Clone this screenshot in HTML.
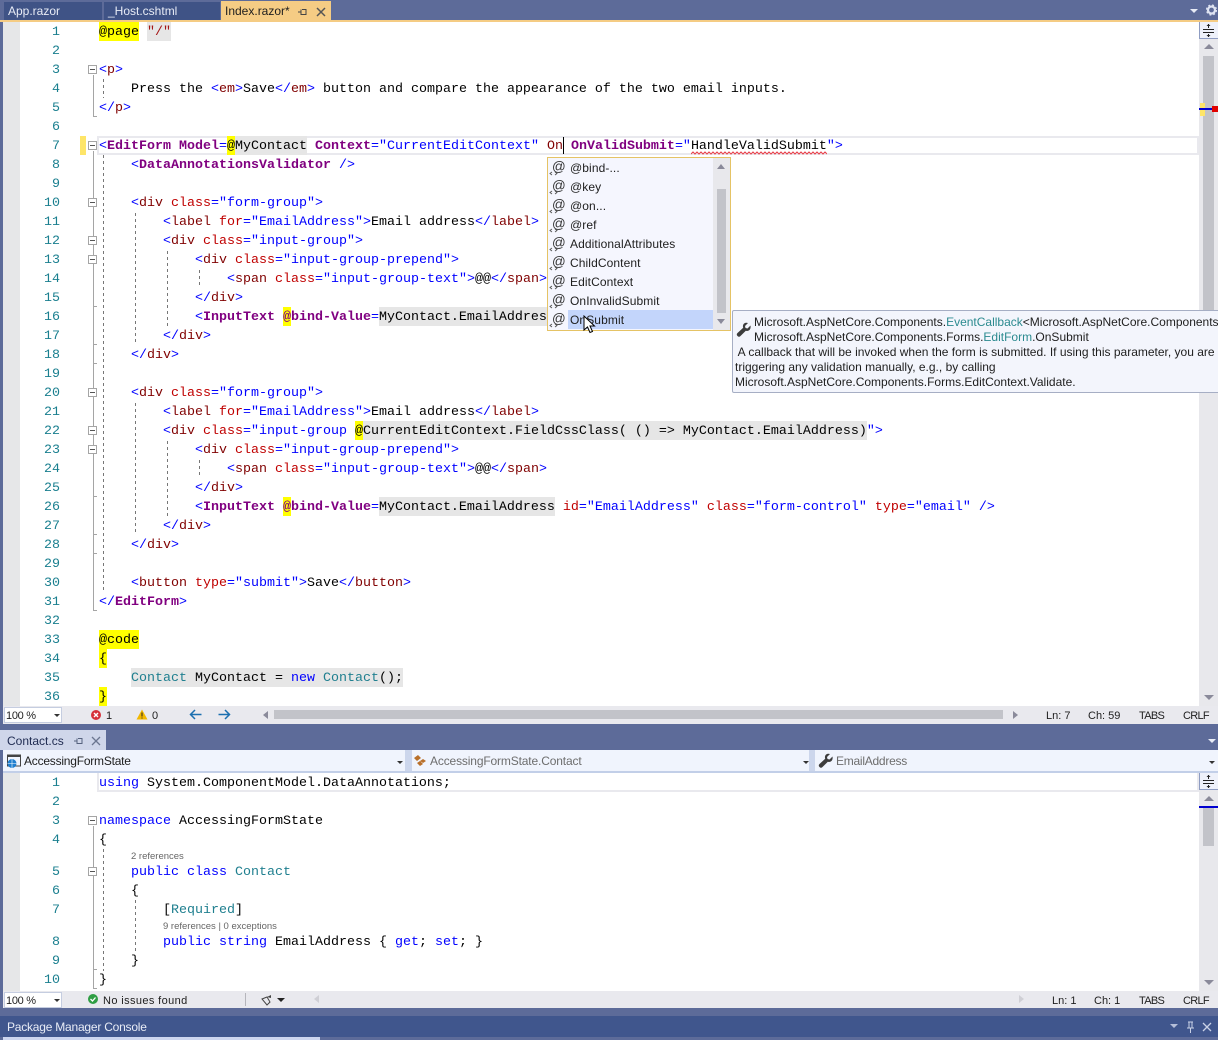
<!DOCTYPE html>
<html><head><meta charset="utf-8">
<style>
html,body{margin:0;padding:0;width:1218px;height:1040px;overflow:hidden;background:#5d6b99}
*{box-sizing:border-box}
.a{position:absolute}
body{font-family:"Liberation Sans",sans-serif;font-size:12px;color:#1e1e1e}
pre{margin:0;font-family:"Liberation Mono",monospace;font-size:13.33px;line-height:19px;position:absolute;white-space:pre;color:#000}
.n{color:#1a7f8f;text-align:right;left:20px;width:40px}
i{font-style:normal}
.b{color:#00f}.m{color:#800000}.r{color:#c00000}.p{color:#800080;font-weight:bold}.t{color:#1f7f8f}.s{color:#a31515}
.y,.g{display:inline-block;line-height:19px;height:18px;vertical-align:top}
.y{background:#ff0;box-shadow:0 -1px 0 #ff0}.g{background:#e6e6e6;box-shadow:0 -1px 0 #e6e6e6}
.o{position:absolute;left:88px;width:9px;height:9px;border:1px solid #a5a5a5;background:#fff}
.o:after{content:"";position:absolute;left:1px;top:3px;width:5px;height:1px;background:#555}
.v{position:absolute;left:93px;width:1px;background:#a5a5a5}
.k{position:absolute;left:93px;width:4px;height:1px;background:#a5a5a5}
.d{position:absolute;width:1px;background:repeating-linear-gradient(to bottom,#777 0,#777 3px,transparent 3px,transparent 6px)}
.u{position:absolute;white-space:pre}
.it{position:absolute;left:570px;height:19px;line-height:19px;font-size:12px;color:#1e1e1e;letter-spacing:.1px}
.at{position:absolute;left:552px;font-size:13.500px;line-height:15px;color:#333;height:15px}
.tri{position:absolute;width:0;height:0;border-style:solid}
.st{position:absolute;font-size:11px;line-height:14px;color:#1e1e1e;white-space:pre}
.cap{letter-spacing:-.7px}
</style></head>
<body>
<!-- top tabs -->
<div class="a" style="left:0;top:0;width:1218px;height:20px;background:#5d6b99"></div>
<div class="a u" style="left:4px;top:2px;width:98px;height:18px;background:#3f5386;color:#e8ecf6;line-height:18px;padding-left:4px">App.razor</div>
<div class="a u" style="left:104px;top:2px;width:116px;height:18px;background:#3f5386;color:#e8ecf6;line-height:18px;padding-left:4px">_Host.cshtml</div>
<div class="a u" style="left:221px;top:1px;width:110px;height:20px;background:#f5cc84;color:#1e1e1e;line-height:21px;padding-left:4px">Index.razor*</div>
<svg class="a" style="left:295px;top:6px" width="38" height="12"><path d="M3 6h3M6 3.500v5h1M7 3.500h4v5h-4" fill="none" stroke="#444"/><path d="M22 2l8 8M30 2l-8 8" stroke="#555" stroke-width="1.500"/></svg>
<div class="tri" style="left:1190px;top:9px;border-width:4px 4px 0;border-color:#e8ecf6 transparent transparent"></div>
<svg class="a" style="left:1206px;top:4px" width="11" height="12"><circle cx="5.500" cy="6" r="3.500" fill="none" stroke="#dfe4f2" stroke-width="2.200"/><circle cx="5.500" cy="6" r="5" fill="none" stroke="#dfe4f2" stroke-width="1.200" stroke-dasharray="2 2"/></svg>
<div class="a" style="left:0;top:20px;width:1218px;height:2px;background:#f5cc84"></div>

<!-- top editor -->
<div class="a" style="left:3px;top:22px;width:17px;height:684px;background:#e6e7e8"></div>
<div class="a" style="left:20px;top:22px;width:1179px;height:684px;background:#fff"></div>
<div class="a" style="left:97px;top:136px;width:1102px;height:19px;border:2px solid #e9e9ee"></div>
<div class="a" style="left:80px;top:136px;width:6px;height:19px;background:#fee568"></div>

<div class="v" style="top:75px;height:42px"></div><div class="k" style="top:116px"></div>
<div class="v" style="top:151px;height:460px"></div><div class="k" style="top:610px"></div>
<div class="k" style="top:363px"></div><div class="k" style="top:344px"></div><div class="k" style="top:306px"></div>
<div class="k" style="top:553px"></div><div class="k" style="top:534px"></div><div class="k" style="top:496px"></div>
<div class="o" style="top:65px"></div>
<div class="o" style="top:141px"></div>
<div class="o" style="top:198px"></div>
<div class="o" style="top:236px"></div>
<div class="o" style="top:255px"></div>
<div class="o" style="top:388px"></div>
<div class="o" style="top:426px"></div>
<div class="o" style="top:445px"></div>

<div class="d" style="left:103px;top:79px;height:19px"></div>
<div class="d" style="left:103px;top:155px;height:437px"></div>
<div class="d" style="left:135px;top:213px;height:131px"></div>
<div class="d" style="left:135px;top:403px;height:131px"></div>
<div class="d" style="left:167px;top:251px;height:76px"></div>
<div class="d" style="left:167px;top:441px;height:76px"></div>
<div class="d" style="left:199px;top:270px;height:18px"></div>
<div class="d" style="left:199px;top:460px;height:18px"></div>

<pre class="n" style="top:23px">1
2
3
4
5
6
7
8
9
10
11
12
13
14
15
16
17
18
19
20
21
22
23
24
25
26
27
28
29
30
31
32
33
34
35
36</pre>
<pre style="left:99px;top:23px"><span class="y">@page</span> <span class="g s">"/"</span>

<i class="b">&lt;</i><i class="m">p</i><i class="b">&gt;</i>
    Press the <i class="b">&lt;</i><i class="m">em</i><i class="b">&gt;</i>Save<i class="b">&lt;/</i><i class="m">em</i><i class="b">&gt;</i> button and compare the appearance of the two email inputs.
<i class="b">&lt;/</i><i class="m">p</i><i class="b">&gt;</i>

<i class="b">&lt;</i><i class="p">EditForm</i> <i class="p">Model</i><i class="b">=</i><span class="y">@</span><span class="g">MyContact</span> <i class="p">Context</i><i class="b">="CurrentEditContext"</i> <i class="m">On</i> <i class="p">OnValidSubmit</i><i class="b">="</i>HandleValidSubmit<i class="b">"&gt;</i>
    <i class="b">&lt;</i><i class="p">DataAnnotationsValidator</i> <i class="b">/&gt;</i>

    <i class="b">&lt;</i><i class="m">div</i> <i class="r">class</i><i class="b">="form-group"&gt;</i>
        <i class="b">&lt;</i><i class="m">label</i> <i class="r">for</i><i class="b">="EmailAddress"&gt;</i>Email address<i class="b">&lt;/</i><i class="m">label</i><i class="b">&gt;</i>
        <i class="b">&lt;</i><i class="m">div</i> <i class="r">class</i><i class="b">="input-group"&gt;</i>
            <i class="b">&lt;</i><i class="m">div</i> <i class="r">class</i><i class="b">="input-group-prepend"&gt;</i>
                <i class="b">&lt;</i><i class="m">span</i> <i class="r">class</i><i class="b">="input-group-text"&gt;</i>@@<i class="b">&lt;/</i><i class="m">span</i><i class="b">&gt;</i>
            <i class="b">&lt;/</i><i class="m">div</i><i class="b">&gt;</i>
            <i class="b">&lt;</i><i class="p">InputText</i> <span class="y" style="font-weight:bold;color:#800080">@</span><i class="p">bind-Value</i><i class="b">=</i><span class="g">MyContact.EmailAddress</span>
        <i class="b">&lt;/</i><i class="m">div</i><i class="b">&gt;</i>
    <i class="b">&lt;/</i><i class="m">div</i><i class="b">&gt;</i>

    <i class="b">&lt;</i><i class="m">div</i> <i class="r">class</i><i class="b">="form-group"&gt;</i>
        <i class="b">&lt;</i><i class="m">label</i> <i class="r">for</i><i class="b">="EmailAddress"&gt;</i>Email address<i class="b">&lt;/</i><i class="m">label</i><i class="b">&gt;</i>
        <i class="b">&lt;</i><i class="m">div</i> <i class="r">class</i><i class="b">="input-group </i><span class="y">@</span><span class="g">CurrentEditContext.FieldCssClass( () =&gt; MyContact.EmailAddress)</span><i class="b">"&gt;</i>
            <i class="b">&lt;</i><i class="m">div</i> <i class="r">class</i><i class="b">="input-group-prepend"&gt;</i>
                <i class="b">&lt;</i><i class="m">span</i> <i class="r">class</i><i class="b">="input-group-text"&gt;</i>@@<i class="b">&lt;/</i><i class="m">span</i><i class="b">&gt;</i>
            <i class="b">&lt;/</i><i class="m">div</i><i class="b">&gt;</i>
            <i class="b">&lt;</i><i class="p">InputText</i> <span class="y" style="font-weight:bold;color:#800080">@</span><i class="p">bind-Value</i><i class="b">=</i><span class="g">MyContact.EmailAddress</span> <i class="r">id</i><i class="b">="EmailAddress"</i> <i class="r">class</i><i class="b">="form-control"</i> <i class="r">type</i><i class="b">="email"</i> <i class="b">/&gt;</i>
        <i class="b">&lt;/</i><i class="m">div</i><i class="b">&gt;</i>
    <i class="b">&lt;/</i><i class="m">div</i><i class="b">&gt;</i>

    <i class="b">&lt;</i><i class="m">button</i> <i class="r">type</i><i class="b">="submit"&gt;</i>Save<i class="b">&lt;/</i><i class="m">button</i><i class="b">&gt;</i>
<i class="b">&lt;/</i><i class="p">EditForm</i><i class="b">&gt;</i>

<span class="y">@code</span>
<span class="y">{</span>
    <span class="g"><i class="t">Contact</i> MyContact = <i class="b">new</i> <i class="t">Contact</i>();</span>
<span class="y">}</span></pre>
<div class="a" style="left:563px;top:137px;width:1px;height:17px;background:#000"></div>
<svg class="a" style="left:691px;top:151px" width="136" height="4"><path d="M0 3 L2 1 L4 3 L6 1 L8 3 L10 1 L12 3 L14 1 L16 3 L18 1 L20 3 L22 1 L24 3 L26 1 L28 3 L30 1 L32 3 L34 1 L36 3 L38 1 L40 3 L42 1 L44 3 L46 1 L48 3 L50 1 L52 3 L54 1 L56 3 L58 1 L60 3 L62 1 L64 3 L66 1 L68 3 L70 1 L72 3 L74 1 L76 3 L78 1 L80 3 L82 1 L84 3 L86 1 L88 3 L90 1 L92 3 L94 1 L96 3 L98 1 L100 3 L102 1 L104 3 L106 1 L108 3 L110 1 L112 3 L114 1 L116 3 L118 1 L120 3 L122 1 L124 3 L126 1 L128 3 L130 1 L132 3 L134 1 L136 3" fill="none" stroke="#e8404a" stroke-width="1"/></svg>

<!-- top scrollbar -->
<div class="a" style="left:1199px;top:22px;width:19px;height:684px;background:#e8e8ec"></div>
<div class="a" style="left:1199px;top:22px;width:19px;height:17px;background:#eef1fa;border-left:1px solid #8e9cc2;border-bottom:1px solid #8e9cc2"></div>
<svg class="a" style="left:1202px;top:23px" width="14" height="15"><path d="M1 6.500h11M1 9.500h11" stroke="#222" stroke-width="1"/><path d="M6.500 1v4M6.500 11v3" stroke="#222"/><path d="M4.500 3l2-2 2 2zM4.500 12l2 2 2-2z" fill="#222"/></svg>
<div class="tri" style="left:1204px;top:44px;border-width:0 5px 5px;border-color:transparent transparent #8a8a9a"></div>
<div class="a" style="left:1203px;top:56px;width:11px;height:294px;background:#c2c3c9"></div>
<div class="a" style="left:1200px;top:103px;width:5px;height:13px;background:#fee568"></div>
<div class="a" style="left:1199px;top:108px;width:19px;height:2px;background:#0000d0"></div>
<div class="a" style="left:1212px;top:106px;width:6px;height:6px;background:#e00000"></div>
<div class="tri" style="left:1204px;top:695px;border-width:5px 5px 0;border-color:#8a8a9a transparent transparent"></div>

<!-- completion popup -->
<div class="a" style="left:547px;top:157px;width:184px;height:174px;background:#f5f6fe;border:1px solid #e5c365"></div>
<div class="a" style="left:568px;top:310px;width:145px;height:19px;background:#c3d5fb"></div>
<div class="a" style="left:713px;top:158px;width:17px;height:172px;background:#e8e8ec"></div>
<div class="tri" style="left:717px;top:164px;border-width:0 4.500px 5px;border-color:transparent transparent #8a8a9a"></div>
<div class="a" style="left:717px;top:189px;width:9px;height:124px;background:#c2c3c9"></div>
<div class="tri" style="left:717px;top:319px;border-width:5px 4.500px 0;border-color:#8a8a9a transparent transparent"></div>
<div class="at" style="top:159px">@</div><div class="it" style="top:159px">@bind-...</div>
<div class="at" style="top:178px">@</div><div class="it" style="top:178px">@key</div>
<div class="at" style="top:197px">@</div><div class="it" style="top:197px">@on...</div>
<div class="at" style="top:216px">@</div><div class="it" style="top:216px">@ref</div>
<div class="at" style="top:235px">@</div><div class="it" style="top:235px">AdditionalAttributes</div>
<div class="at" style="top:254px">@</div><div class="it" style="top:254px">ChildContent</div>
<div class="at" style="top:273px">@</div><div class="it" style="top:273px">EditContext</div>
<div class="at" style="top:292px">@</div><div class="it" style="top:292px">OnInvalidSubmit</div>
<div class="at" style="top:311px">@</div><div class="it" style="top:311px">OnSubmit</div>
<svg class="a" style="left:549px;top:158px" width="10" height="172"><path fill="none" stroke="#555" stroke-width=".9" d="M3 14l-2 1.500 2 1.500M6 14l2 1.500-2 1.500M3 33l-2 1.500 2 1.500M6 33l2 1.500-2 1.500M3 52l-2 1.500 2 1.500M6 52l2 1.500-2 1.500M3 71l-2 1.500 2 1.500M6 71l2 1.500-2 1.500M3 90l-2 1.500 2 1.500M6 90l2 1.500-2 1.500M3 109l-2 1.500 2 1.500M6 109l2 1.500-2 1.500M3 128l-2 1.500 2 1.500M6 128l2 1.500-2 1.500M3 147l-2 1.500 2 1.500M6 147l2 1.500-2 1.500M3 166l-2 1.500 2 1.500M6 166l2 1.500-2 1.500"/></svg>
<svg class="a" style="left:583px;top:315px" width="13" height="19"><path d="M1 1v14l3.500-3 2.500 5.500 2.500-1-2.500-5.500h4.500z" fill="#fff" stroke="#000" stroke-width="1"/></svg>

<!-- tooltip -->
<div class="a" style="left:732px;top:310px;width:490px;height:83px;background:#f3f5fc;border:1px solid #a6aec4;border-radius:2px"></div>
<svg class="a" style="left:736px;top:322px" width="16" height="16"><path d="M14.500 3.500l-3 3-2-.5-.5-2 3-3c-2-.7-4.500 0-5 2.500-.2 1 0 1.500.2 2.200L1.500 11c-1 1-1 2 0 3s2 1 3 0l5.300-5.200c2.500.7 5.500-1 4.700-5.300z" fill="#3c3c3c"/></svg>
<div class="a u" style="left:754px;top:315px;line-height:15px;font-size:12px;color:#1e1e1e">Microsoft.AspNetCore.Components.<span style="color:#2b8a8f">EventCallback</span>&lt;Microsoft.AspNetCore.Components
Microsoft.AspNetCore.Components.Forms.<span style="color:#2b8a8f">EditForm</span>.OnSubmit</div>
<div class="a u" style="left:735px;top:345px;line-height:15px;font-size:12px;color:#1e1e1e"> A callback that will be invoked when the form is submitted. If using this parameter, you are
triggering any validation manually, e.g., by calling
Microsoft.AspNetCore.Components.Forms.EditContext.Validate.</div>

<!-- top status -->
<div class="a" style="left:3px;top:706px;width:1215px;height:18px;background:#e9e9ee"></div>
<div class="a" style="left:4px;top:707px;width:58px;height:16px;background:#fff;border:1px solid #c5cde0"></div>
<div class="st" style="left:6px;top:709px;letter-spacing:-.3px">100 %</div>
<div class="tri" style="left:54px;top:714px;border-width:3px 3px 0;border-color:#333 transparent transparent"></div>
<svg class="a" style="left:90px;top:709px" width="12" height="12"><circle cx="6" cy="6" r="5" fill="#d6303a"/><path d="M4 4l4 4M8 4l-4 4" stroke="#fff" stroke-width="1.400"/></svg>
<div class="st" style="left:106px;top:709px">1</div>
<svg class="a" style="left:136px;top:709px" width="12" height="11"><path d="M6 .500l5.500 10H.500z" fill="#f2b800"/><path d="M6 3.500v4M6 8.500v1" stroke="#222" stroke-width="1"/></svg>
<div class="st" style="left:152px;top:709px">0</div>
<svg class="a" style="left:189px;top:708px" width="42" height="13"><path d="M1.500 6.500h11M6 2L1.500 6.500 6 11M29.500 6.500h11M36 2l4.500 4.500L36 11" fill="none" stroke="#1a6fb0" stroke-width="1.500"/></svg>
<div class="tri" style="left:263px;top:711px;border-width:4px 5px 4px 0;border-color:transparent #8a8a9a transparent transparent"></div>
<div class="a" style="left:274px;top:710px;width:729px;height:9px;background:#c2c3c9"></div>
<div class="tri" style="left:1013px;top:711px;border-width:4px 0 4px 5px;border-color:transparent transparent transparent #8a8a9a"></div>
<div class="st" style="left:1046px;top:709px">Ln: 7</div>
<div class="st" style="left:1088px;top:709px">Ch: 59</div>
<div class="st cap" style="left:1139px;top:709px">TABS</div>
<div class="st cap" style="left:1183px;top:709px">CRLF</div>

<!-- lower tab row -->
<div class="a" style="left:0;top:724px;width:1218px;height:26px;background:#5d6b99"></div>
<div class="a u" style="left:0;top:730px;width:106px;height:20px;background:#cfd6ea;padding-left:7px;line-height:22px;color:#1e2a50">Contact.cs</div>
<svg class="a" style="left:72px;top:735px" width="32" height="12"><path d="M2 6h3M5 3.500v5h1M6 3.500h4v5H6" fill="none" stroke="#56627f"/><path d="M20 2l8 8M28 2l-8 8" stroke="#6b7690" stroke-width="1.300"/></svg>
<div class="tri" style="left:1208px;top:739px;border-width:4px 4px 0;border-color:#e8ecf6 transparent transparent"></div>

<!-- nav bar -->
<div class="a" style="left:3px;top:750px;width:1215px;height:23px;background:#f0f4fd;border-bottom:2px solid #c2cfe8"></div>
<div class="a" style="left:405px;top:750px;width:7px;height:21px;background:#ccd6ec"></div>
<div class="a" style="left:809px;top:750px;width:6px;height:21px;background:#ccd6ec"></div>
<svg class="a" style="left:7px;top:754px" width="15" height="15"><rect x="0.500" y="1" width="13" height="11" fill="none" stroke="#444"/><rect x="0" y="1" width="14" height="2" fill="#444"/><circle cx="5" cy="9.500" r="4.500" fill="#1f7fd0"/><path d="M.500 9.500h9M5 5v9" stroke="#fff" stroke-width=".6"/></svg>
<div class="a u" style="left:24px;top:754px;line-height:15px;color:#1e1e1e;letter-spacing:-.22px">AccessingFormState</div>
<div class="tri" style="left:397px;top:761px;border-width:3px 3px 0;border-color:#333 transparent transparent"></div>
<svg class="a" style="left:413px;top:754px" width="15" height="14"><path d="M1 4l4-3 3 3-4 3zM7 7l3-2 3 2-3 2zM4 9l3-2 3 3-3 2z" fill="#b9702a"/></svg>
<div class="a u" style="left:430px;top:754px;line-height:15px;color:#6d6d6d;letter-spacing:-.15px">AccessingFormState.Contact</div>
<div class="tri" style="left:803px;top:761px;border-width:3px 3px 0;border-color:#333 transparent transparent"></div>
<svg class="a" style="left:818px;top:753px" width="16" height="16"><path d="M14.500 3.500l-3 3-2-.5-.5-2 3-3c-2-.7-4.500 0-5 2.500-.2 1 0 1.500.2 2.200L1.500 11c-1 1-1 2 0 3s2 1 3 0l5.300-5.200c2.500.7 5.500-1 4.700-5.300z" fill="#3c3c3c"/></svg>
<div class="a u" style="left:836px;top:754px;line-height:15px;color:#6d6d6d;letter-spacing:-.25px">EmailAddress</div>
<div class="tri" style="left:1209px;top:761px;border-width:3px 3px 0;border-color:#333 transparent transparent"></div>

<!-- lower editor -->
<div class="a" style="left:3px;top:773px;width:17px;height:218px;background:#e6e7e8"></div>
<div class="a" style="left:20px;top:773px;width:1179px;height:218px;background:#fff"></div>
<div class="a" style="left:97px;top:773px;width:1102px;height:19px;border:2px solid #e9e9ee;border-top-width:0"></div>
<div class="v" style="top:826px;height:163px"></div><div class="k" style="top:988px"></div><div class="k" style="top:969px"></div>
<div class="o" style="top:816px"></div>
<div class="o" style="top:867px"></div>
<div class="d" style="left:103px;top:849px;height:122px"></div>
<div class="d" style="left:135px;top:900px;height:52px"></div>
<pre class="n" style="top:774px">1
2
3
4</pre>
<pre class="n" style="top:863px">5
6
7</pre>
<pre class="n" style="top:933px">8
9
10</pre>
<pre style="left:99px;top:774px"><i class="b">using</i> System.ComponentModel.DataAnnotations;

<i class="b">namespace</i> AccessingFormState
{</pre>
<div class="a u" style="left:131px;top:851px;font-size:9.500px;line-height:12px;color:#666">2 references</div>
<pre style="left:99px;top:863px">    <i class="b">public</i> <i class="b">class</i> <i class="t">Contact</i>
    {
        [<i class="t">Required</i>]</pre>
<div class="a u" style="left:163px;top:921px;font-size:9.500px;line-height:12px;color:#666">9 references | 0 exceptions</div>
<pre style="left:99px;top:933px">        <i class="b">public</i> <i class="b">string</i> EmailAddress { <i class="b">get</i>; <i class="b">set</i>; }
    }
}</pre>
<div class="a" style="left:1199px;top:773px;width:19px;height:218px;background:#e8e8ec"></div>
<div class="a" style="left:1199px;top:773px;width:19px;height:17px;background:#eef1fa;border-left:1px solid #8e9cc2;border-bottom:1px solid #8e9cc2"></div>
<svg class="a" style="left:1202px;top:774px" width="14" height="15"><path d="M1 6.500h11M1 9.500h11" stroke="#222"/><path d="M6.500 1v4M6.500 11v3" stroke="#222"/><path d="M4.500 3l2-2 2 2zM4.500 12l2 2 2-2z" fill="#222"/></svg>
<div class="tri" style="left:1204px;top:796px;border-width:0 5px 5px;border-color:transparent transparent #8a8a9a"></div>
<div class="a" style="left:1203px;top:808px;width:11px;height:38px;background:#c2c3c9"></div>
<div class="a" style="left:1199px;top:806px;width:19px;height:2px;background:#0000d0"></div>
<div class="tri" style="left:1204px;top:980px;border-width:5px 5px 0;border-color:#8a8a9a transparent transparent"></div>

<!-- lower status -->
<div class="a" style="left:3px;top:991px;width:1215px;height:17px;background:#e9e9ee"></div>
<div class="a" style="left:4px;top:992px;width:58px;height:16px;background:#fff;border:1px solid #c5cde0"></div>
<div class="st" style="left:6px;top:994px;letter-spacing:-.3px">100 %</div>
<div class="tri" style="left:54px;top:999px;border-width:3px 3px 0;border-color:#333 transparent transparent"></div>
<svg class="a" style="left:88px;top:994px" width="11" height="11"><circle cx="5" cy="5" r="5" fill="#2f9e44"/><path d="M2.500 5l2 2 3-3.500" fill="none" stroke="#fff" stroke-width="1.300"/></svg>
<div class="st" style="left:103px;top:994px;letter-spacing:.38px">No issues found</div>
<div class="a" style="left:245px;top:993px;width:1px;height:13px;background:#b5b5bb"></div>
<svg class="a" style="left:261px;top:994px" width="24" height="12"><path d="M1 5l5-2 3 5-3 3z" fill="none" stroke="#444"/><path d="M6 3l4-2v3z" fill="#444"/><path d="M16 4h8l-4 4z" fill="#222"/></svg>
<div class="tri" style="left:314px;top:995px;border-width:4px 5px 4px 0;border-color:transparent #cfcfd5 transparent transparent"></div>
<div class="tri" style="left:1019px;top:995px;border-width:4px 0 4px 5px;border-color:transparent transparent transparent #cfcfd5"></div>
<div class="st" style="left:1052px;top:994px">Ln: 1</div>
<div class="st" style="left:1094px;top:994px">Ch: 1</div>
<div class="st cap" style="left:1139px;top:994px">TABS</div>
<div class="st cap" style="left:1183px;top:994px">CRLF</div>

<!-- package manager bar -->
<div class="a" style="left:0;top:1008px;width:1218px;height:8px;background:#5d6b99"></div>
<div class="a u" style="left:0;top:1016px;width:1218px;height:21px;background:#40568d;color:#e8ecf6;padding-left:7px;line-height:22px;letter-spacing:-.22px">Package Manager Console</div>
<div class="a" style="left:3px;top:1037px;width:317px;height:3px;background:#ccd5ef"></div>
<div class="a" style="left:320px;top:1037px;width:898px;height:3px;background:#5d6b99"></div>
<div class="tri" style="left:1170px;top:1024px;border-width:4px 4px 0;border-color:#b5bfd9 transparent transparent"></div>
<svg class="a" style="left:1185px;top:1021px" width="32" height="13"><path d="M3 1h5M4 1v6h3V1M2 7h7M5.500 7v5" fill="none" stroke="#c9d1e6"/><path d="M18 2l8 8M26 2l-8 8" stroke="#c9d1e6" stroke-width="1.300"/></svg>
</body></html>
